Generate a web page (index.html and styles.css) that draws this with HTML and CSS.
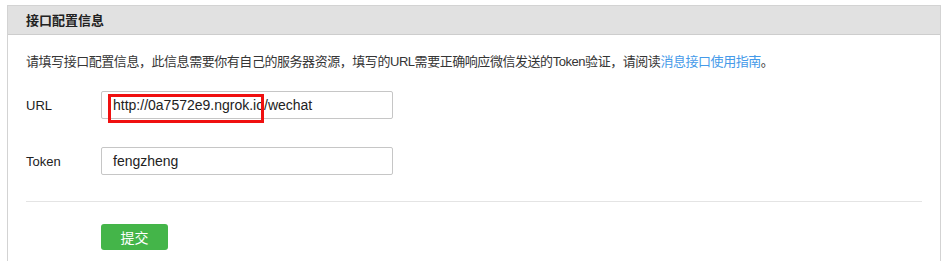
FILE: index.html
```html
<!DOCTYPE html>
<html lang="zh-CN">
<head>
<meta charset="utf-8">
<title>接口配置信息</title>
<link rel="stylesheet" href="styles.css">
</head>
<body>
<div class="panel">
  <div class="panel-head">接口配置信息</div>
  <div class="panel-body">
    <p class="desc">请填写接口配置信息，此信息需要你有自己的服务器资源，填写的URL需要正确响应微信发送的Token验证，请阅读<a class="link" href="#">消息接口使用指南</a>。</p>
    <div class="form">
      <div class="row">
        <label class="label">URL</label>
        <div class="field">
          <div class="input">http://0a7572e9.ngrok.io/wechat</div>
          <span class="mark"></span>
        </div>
      </div>
      <div class="row">
        <label class="label">Token</label>
        <div class="field">
          <div class="input">fengzheng</div>
        </div>
      </div>
    </div>
    <div class="divider"></div>
    <div class="actions">
      <button class="btn" type="button">提交</button>
    </div>
  </div>
</div>
</body>
</html>
```
FILE: styles.css
```css
html, body {
  margin: 0;
  padding: 0;
  background: #fff;
}
body {
  font-family: "Liberation Sans", "Noto Sans CJK SC", sans-serif;
  color: #222;
  overflow: hidden;
  height: 261px;
}
.panel {
  box-sizing: border-box;
  margin: 5px 0 0 7px;
  width: 934px;
  height: 256px;
  border: 1px solid #d3d3d3;
  border-bottom: none;
}
.panel-head {
  height: 28px;
  line-height: 28px;
  background: #e1e1e1;
  border-bottom: 1px solid #cdcdcd;
  padding-left: 18px;
  font-size: 13px;
  font-weight: bold;
  font-family: "Noto Sans CJK SC", sans-serif;
  color: #222;
}
.panel-body {
  padding: 17px 18px 0 18px;
}
.desc {
  margin: 0;
  font-size: 13px;
  line-height: 20px;
  letter-spacing: -0.45px;
  color: #353535;
  font-family: "Liberation Sans", "Noto Sans CJK SC", sans-serif;
  white-space: nowrap;
}
.link {
  color: #459ae9;
  text-decoration: none;
}
.form {
  display: flex;
  flex-direction: column;
  gap: 28px;
  margin-top: 19px;
}
.row {
  display: flex;
  align-items: center;
}
.label {
  width: 75px;
  font-size: 13px;
  color: #222;
  line-height: 20px;
  position: relative;
  top: 1px;
}
.field {
  position: relative;
}
.input {
  box-sizing: border-box;
  width: 292px;
  height: 28px;
  border: 1px solid #c6c6c6;
  border-radius: 2px;
  padding-left: 11px;
  font-size: 14px;
  line-height: 26px;
  color: #222;
  background: #fff;
}
.mark {
  position: absolute;
  left: 7px;
  top: 3px;
  width: 150px;
  height: 23px;
  border: 3px solid #f01010;
}
.divider {
  height: 1px;
  background: #e4e4e4;
  margin-top: 26px;
}
.actions {
  padding: 22px 0 0 75px;
}
.btn {
  width: 67px;
  height: 26px;
  border: none;
  border-radius: 3px;
  background: #44b549;
  color: #fff;
  font-size: 14px;
  font-family: "Noto Sans CJK SC", sans-serif;
  padding: 0;
  line-height: 26px;
  cursor: pointer;
}
```
